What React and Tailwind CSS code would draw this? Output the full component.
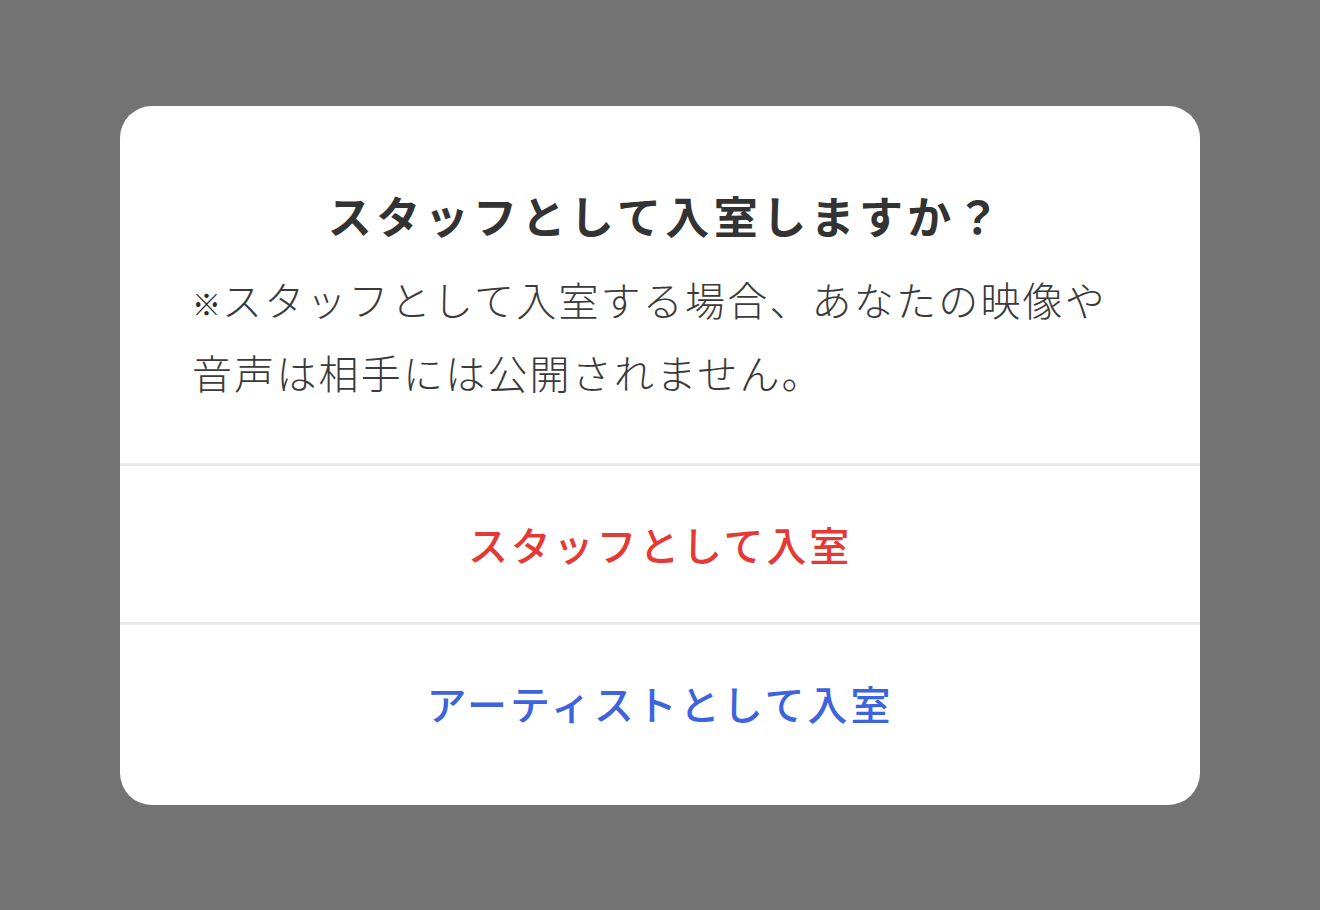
import React from 'react'

const font = { fontFamily: '"Noto Sans CJK JP", "Noto Sans", sans-serif' }

export default function App() {
	return (
		<div className="min-h-[910px] w-full bg-[#737373] flex justify-center pt-[106px]" style={font}>
			<div className="w-[1080px] h-[699px] rounded-[32px] bg-white flex flex-col overflow-hidden">
				{/* Header */}
				<div className="pt-[79px] pb-[54px] pl-[72px] pr-[60px]">
					<h2 className="text-center text-[44px] leading-[60px] font-bold tracking-[0.1em] text-[#333333]">
						スタッフとして入室しますか？
					</h2>
					<p className="mt-[18px] text-[40px] leading-[73px] tracking-[0.055em] text-[#3a3a3a] font-light">
						<span className="inline-block align-baseline text-[29px] leading-none font-medium tracking-normal text-[#2a2a2a] mr-[1px]">※</span>スタッフとして入室する場合、あなたの映像や音声は相手には公開されません。
					</p>
				</div>

				{/* Actions */}
				<button className="h-[159px] border-t-[3px] border-[#e9e9ec] text-[40px] font-medium tracking-[0.07em] text-[#e53935]">
					スタッフとして入室
				</button>
				<button className="h-[159px] border-t-[3px] border-[#e9e9ec] text-[40px] font-medium tracking-[0.075em] text-[#3d63dd]">
					アーティストとして入室
				</button>
			</div>
		</div>
	)
}
